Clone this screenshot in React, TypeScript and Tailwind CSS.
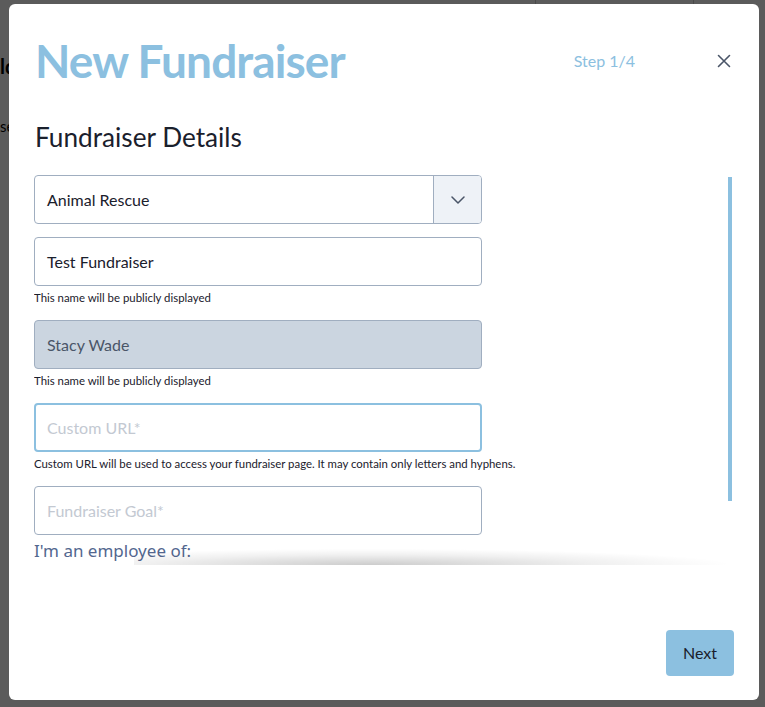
import React from "react";

function Chevron() {
  return (
    <svg width="14" height="8" viewBox="0 0 14 8" fill="none">
      <path d="M1 1l6 6 6-6" stroke="#4a5568" strokeWidth="1.5" strokeLinecap="round" strokeLinejoin="round" />
    </svg>
  );
}

function CloseIcon() {
  return (
    <svg width="14" height="14" viewBox="0 0 14 14" fill="none">
      <path d="M1.5 1.5l11 11M12.5 1.5l-11 11" stroke="#4a5568" strokeWidth="1.6" strokeLinecap="round" />
    </svg>
  );
}

export default function App() {
  return (
    <div className="relative w-[765px] h-[707px] overflow-hidden bg-[#5b5b5b] font-['Lato',sans-serif]">
      {/* dimmed page behind the modal */}
      <div className="absolute left-0 top-[54px] text-[20px] font-bold text-black leading-[24px]">ld</div>
      <div className="absolute left-0 top-[117px] text-[15px] text-black leading-[18px]">se</div>
      <div className="absolute left-[535px] top-0 h-[10px] w-px bg-[#4a4a4a]" />
      <div className="absolute left-[693px] top-0 h-[10px] w-px bg-[#4a4a4a]" />

      {/* modal */}
      <div className="absolute left-[9px] top-[4px] w-[750px] h-[696px] bg-white rounded-[6px] flex flex-col">
        <div className="flex items-center h-[48px] mt-[33px] pl-[26px] pr-[28px]">
          <h1 className="text-[46px] leading-[48px] font-bold text-[#8cc0e0] tracking-[-0.9px]">New Fundraiser</h1>
          <span className="ml-auto text-[16px] leading-[16px] text-[#8cc0e0]">Step 1/4</span>
          <button className="ml-[82px] flex items-center justify-center">
            <CloseIcon />
          </button>
        </div>

        <h2 className="mt-[38px] pl-[26px] text-[26.2px] leading-[28px] text-[#1a202c]">Fundraiser Details</h2>

        <div className="relative mt-[24px] ml-[25px] mr-[27px] h-[390px] flex overflow-hidden">
          <div className="flex-1 flex flex-col">
            <div className="flex w-[448px] h-[49px] rounded-[4px] border border-[#a0aec0] overflow-hidden">
              <div className="flex-1 flex items-center pl-[12px] text-[16px] text-[#1a202c]">Animal Rescue</div>
              <div className="w-[48px] flex items-center justify-center border-l border-[#a0aec0] bg-[#eef2f7]">
                <Chevron />
              </div>
            </div>

            <div className="mt-[13px] w-[448px] h-[49px] rounded-[4px] border border-[#a0aec0] flex items-center pl-[12px] text-[16px] text-[#1a202c]">
              Test Fundraiser
            </div>
            <p className="mt-[4px] text-[11.4px] leading-[16px] text-[#1a202c]">This name will be publicly displayed</p>

            <div className="mt-[14px] w-[448px] h-[49px] rounded-[4px] border border-[#a0aec0] bg-[#cbd5e0] flex items-center pl-[12px] text-[16px] text-[#4a5568]">
              Stacy Wade
            </div>
            <p className="mt-[4px] text-[11.4px] leading-[16px] text-[#1a202c]">This name will be publicly displayed</p>

            <div className="mt-[14px] w-[448px] h-[49px] rounded-[4px] border-2 border-[#8cc0e0] flex items-center pl-[11px] text-[16px] text-[#c3c9d2]">
              Custom URL*
            </div>
            <p className="mt-[4px] text-[11.4px] leading-[16px] text-[#1a202c]">
              Custom URL will be used to access your fundraiser page. It may contain only letters and hyphens.
            </p>

            <div className="mt-[14px] w-[448px] h-[49px] rounded-[4px] border border-[#a0aec0] flex items-center pl-[12px] text-[16px] text-[#c3c9d2]">
              Fundraiser Goal*
            </div>

            <p className="mt-[6px] text-[17px] leading-[20px] text-[#53678f] font-['Noto_Sans',sans-serif]">I&apos;m an employee of:</p>
          </div>

          <div className="w-[4px] flex flex-col">
            <div className="mt-[2px] h-[324px] w-[4px] bg-[#8cc0e0]" />
          </div>

          <div className="pointer-events-none absolute bottom-0 left-[100px] right-[6px] h-[16px] bg-[radial-gradient(ellipse_at_40%_100%,rgba(0,0,0,0.2),rgba(0,0,0,0.06)_45%,transparent_72%)]" />
        </div>

        <div className="flex-1" />
        <div className="flex justify-end pr-[25px] pb-[24px]">
          <button className="w-[68px] h-[46px] rounded-[4px] bg-[#8cc0e0] text-[16px] text-[#1a202c]">Next</button>
        </div>
      </div>
    </div>
  );
}
